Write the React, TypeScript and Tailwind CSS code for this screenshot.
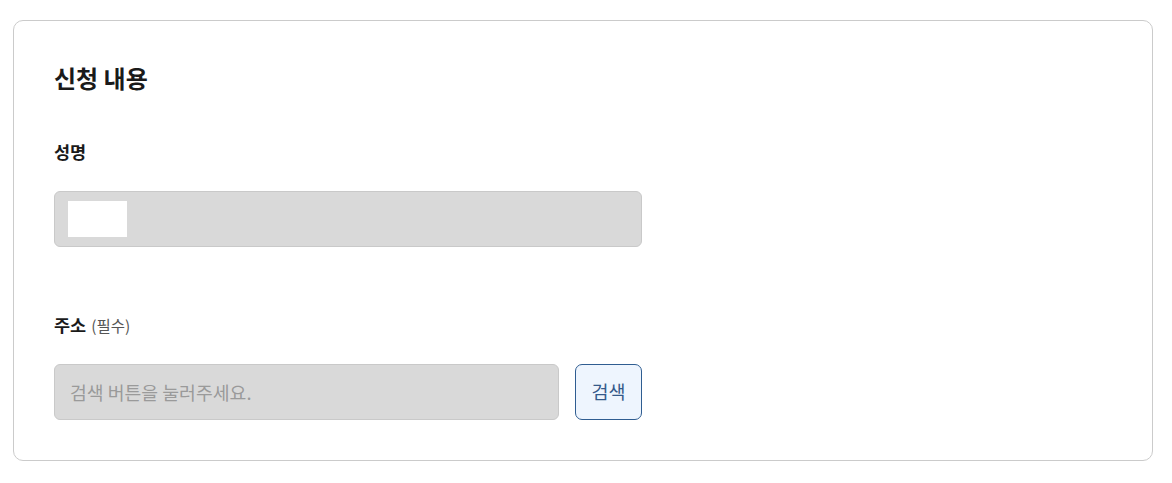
import React from 'react';

const font = { fontFamily: '"Noto Sans CJK KR", "Noto Sans", sans-serif' };

export default function App() {
  return (
    <div className="min-h-screen bg-white pt-[20px] pl-[13px]" style={font}>
      <section className="w-[1140px] rounded-[10px] border border-[#cbcbcb] bg-white px-10 pt-10 pb-10">
        <h2 className="text-[24px] leading-[33px] font-bold text-[#1a1a1a]">신청 내용</h2>

        {/* 성명 */}
        <div className="mt-[46px]">
          <label className="block text-[17.5px] leading-[24px] font-bold text-[#1a1a1a]">성명</label>
          <div className="mt-[27px] flex h-[56px] w-[588px] items-center rounded-[6px] border border-[#c9c9c9] bg-[#d9d9d9] px-[13px]">
            <div className="h-[36px] w-[59px] bg-white" />
          </div>
        </div>

        {/* 주소 */}
        <div className="mt-[66px]">
          <label className="flex h-[24px] items-baseline gap-[5px] text-[17.5px] leading-[24px] font-bold text-[#1a1a1a]">
            주소
            <span className="text-[15.5px] font-normal text-[#555]">(필수)</span>
          </label>
          <div className="mt-[27px] flex w-[588px] gap-4">
            <input
              readOnly
              placeholder="검색 버튼을 눌러주세요."
              className="h-[56px] flex-1 rounded-[6px] border border-[#c9c9c9] bg-[#d9d9d9] px-[15px] text-[18.3px] text-[#333] outline-none placeholder:text-[#9a9a9a]"
            />
            <button className="h-[56px] w-[67px] rounded-[7px] border border-[#2f5d91] bg-[#eef5fe] text-[18.5px] text-[#34598a]">
              검색
            </button>
          </div>
        </div>
      </section>
    </div>
  );
}
